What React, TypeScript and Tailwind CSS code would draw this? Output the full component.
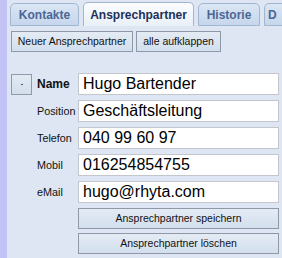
import React from "react";

const font = { fontFamily: '"Liberation Sans", Arial, sans-serif' };

function Tab({ label, active, w }: { label: string; active?: boolean; w: string }) {
  return (
    <div
      className={
        "h-[23px] shrink-0 rounded-t-[5px] border border-[#a3b6d0] flex items-center justify-center text-[12px] font-bold " +
        w +
        (active
          ? " bg-gradient-to-b from-[#fbfcfe] to-[#e9f0f8] text-[#1d3158] border-b-0 h-[24px]"
          : " bg-gradient-to-b from-[#dbe6f4] to-[#c6d6ec] text-[#4a6795]")
      }
    >
      {label}
    </div>
  );
}

function Btn({ children, className = "" }: { children: React.ReactNode; className?: string }) {
  return (
    <div
      className={
        "h-[21px] border border-[#8e98a6] bg-gradient-to-b from-[#e4ebf4] to-[#d3dfee] flex items-center justify-center text-[10.5px] text-[#111] " +
        className
      }
    >
      {children}
    </div>
  );
}

function Row({ label, value, bold, toggle }: { label: string; value: string; bold?: boolean; toggle?: boolean }) {
  return (
    <div className="flex h-[22px] items-center">
      <div className="w-[71px] shrink-0 flex items-center pl-[4px]">
        {toggle ? (
          <div className="w-[21px] h-[21px] border border-[#8f9bab] bg-gradient-to-b from-[#e2eaf4] to-[#d3deec] flex items-center justify-center">
            <div className="w-[2px] h-[1px] bg-[#555]" />
          </div>
        ) : (
          <div className="w-[21px]" />
        )}
        <span className={"ml-[5px] text-[#111] " + (bold ? "text-[12px] font-bold" : "text-[10.8px]")}>{label}</span>
      </div>
      <div className="w-[201px] h-[22px] border border-[#c3c7cd] bg-white flex items-center pl-[4px] text-[16px] text-black leading-none">
        {value}
      </div>
    </div>
  );
}

export default function App() {
  return (
    <div className="w-[282px] h-[258px] flex overflow-hidden" style={font}>
      <div className="w-[7px] shrink-0 bg-[#c2c3f4]" />
      <div className="flex-1 bg-[#dde6f2] flex flex-col">
        <div className="flex items-end gap-[4px] pl-[3px] pt-[3px] h-[26px]">
          <Tab label="Kontakte" w="w-[69px]" />
          <Tab label="Ansprechpartner" active w="w-[111px]" />
          <Tab label="Historie" w="w-[62px]" />
          <div className="h-[23px] w-[30px] shrink-0 rounded-t-[5px] border border-[#a3b6d0] bg-gradient-to-b from-[#dbe6f4] to-[#c6d6ec] text-[12px] font-bold text-[#4a6795] flex items-center pl-[3px]">
            D
          </div>
        </div>
        <div className="flex gap-[3px] pl-[4px] mt-[5px]">
          <Btn className="w-[122px]">Neuer Ansprechpartner</Btn>
          <Btn className="w-[85px]">alle aufklappen</Btn>
        </div>
        <div className="flex flex-col gap-[5px] mt-[21px]">
          <Row label="Name" value="Hugo Bartender" bold toggle />
          <Row label="Position" value="Geschäftsleitung" />
          <Row label="Telefon" value="040 99 60 97" />
          <Row label="Mobil" value="016254854755" />
          <Row label="eMail" value="hugo@rhyta.com" />
          <div className="flex flex-col gap-[4px] pl-[71px]">
            <Btn className="w-[201px]">Ansprechpartner speichern</Btn>
            <Btn className="w-[201px]">Ansprechpartner löschen</Btn>
          </div>
        </div>
      </div>
    </div>
  );
}
